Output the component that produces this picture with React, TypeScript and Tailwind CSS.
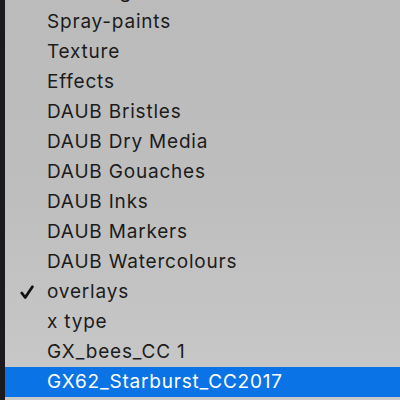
import React from 'react';

type Item = { label: string; checked?: boolean; selected?: boolean };

const items: Item[] = [
  { label: 'Blending' },
  { label: 'Spray-paints' },
  { label: 'Texture' },
  { label: 'Effects' },
  { label: 'DAUB Bristles' },
  { label: 'DAUB Dry Media' },
  { label: 'DAUB Gouaches' },
  { label: 'DAUB Inks' },
  { label: 'DAUB Markers' },
  { label: 'DAUB Watercolours' },
  { label: 'overlays', checked: true },
  { label: 'x type' },
  { label: 'GX_bees_CC 1' },
  { label: 'GX62_Starburst_CC2017', selected: true },
  { label: '' },
];

const Check = () => (
  <svg width="14" height="15" viewBox="0 0 14 15" className="absolute left-[15px] top-[8px]">
    <path d="M1.8 8 L5.2 12.5 L12.4 1.8" fill="none" stroke="#111" strokeWidth="2.8" strokeLinecap="round" strokeLinejoin="round" />
  </svg>
);

export default function App() {
  return (
    <div className="flex h-[400px] w-[400px] overflow-hidden bg-[#bdbdbd]" style={{ fontFamily: 'Inter, "Liberation Sans", sans-serif' }}>
      <div className="w-[5px] shrink-0 bg-[#1c1a1f]" />
      <div className="flex-1 overflow-hidden bg-gradient-to-b from-[#bbbbbb] via-[#bebebe] to-[#c9c9c9]">
        <ul className="-mt-[23px]">
          {items.map((it, i) => (
            <li
              key={i}
              className={`relative flex h-[30px] items-center pl-[42px] text-[19px] tracking-[0.8px] ${
                it.selected ? 'bg-[#0a74e6] text-white' : 'text-[#1c1c1c]'
              }`}
            >
              {it.checked && <Check />}
              {it.label}
            </li>
          ))}
        </ul>
      </div>
    </div>
  );
}
